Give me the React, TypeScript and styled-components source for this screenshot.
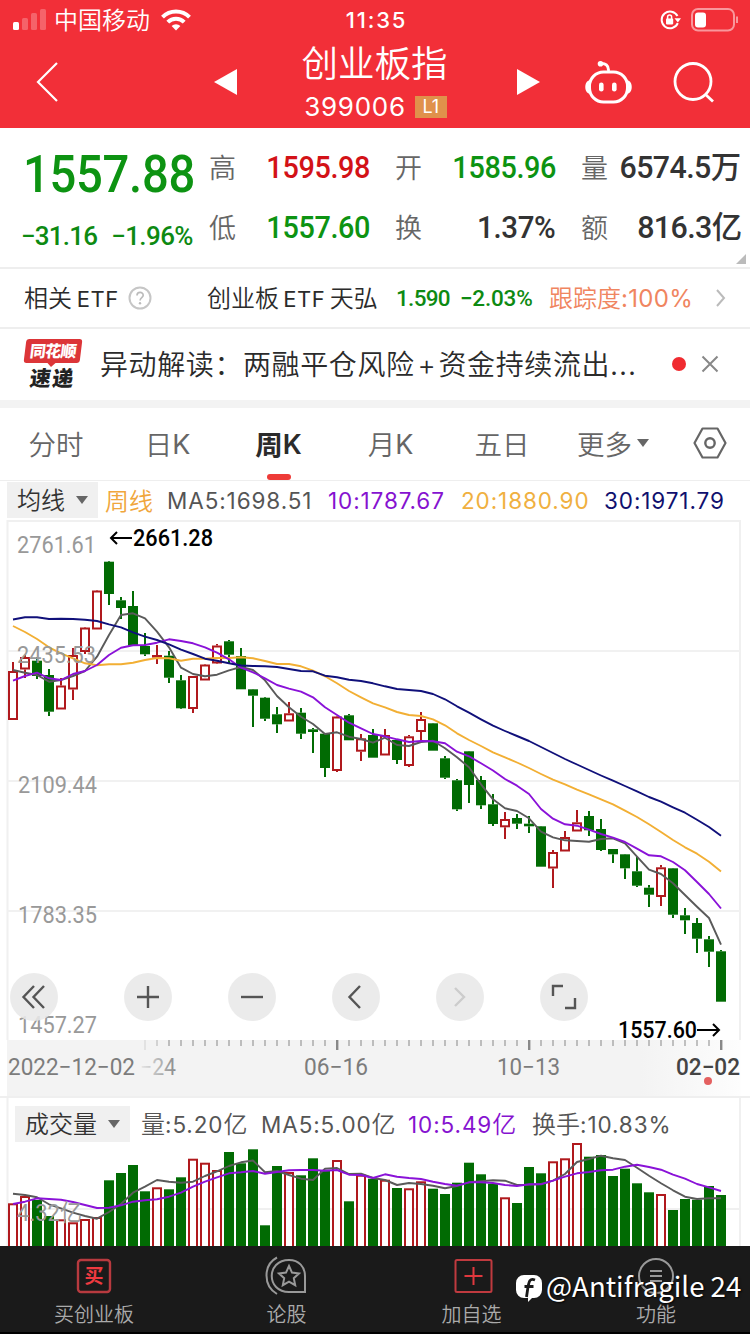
import React from 'react';
import styled, { createGlobalStyle } from 'styled-components';

const CJK = '"Noto Sans CJK SC", sans-serif';
const UI = `Inter, ${CJK}`;
const DIN = `Roboto, ${CJK}`;

const GlobalStyle = createGlobalStyle`
  * { box-sizing: border-box; }
  body {
    margin: 0;
    background: #fff;
    font-family: ${UI};
    font-weight: 350;
    font-optical-sizing: none;
    color: #2b2b2b;
  }
  svg { display: block; flex: none; overflow: visible; }
`;

const Screen = styled.div`
  position: relative;
  width: 750px;
  height: 1334px;
  overflow: hidden;
  display: flex;
  flex-direction: column;
  white-space: nowrap;
`;

/* ---------- shared text ---------- */

const Din = styled.span<{
  $size: number;
  $color?: string;
  $ls?: number;
  $weight?: number;
  $narrow?: number;
  $origin?: string;
}>`
  display: inline-block;
  font-family: ${DIN};
  font-size: ${(p) => p.$size}px;
  font-weight: ${(p) => p.$weight ?? 500};
  letter-spacing: ${(p) => p.$ls ?? 0}px;
  color: ${(p) => p.$color ?? '#333'};
  transform: scaleX(${(p) => p.$narrow ?? 1});
  transform-origin: ${(p) => p.$origin ?? 'left'} center;
`;

const Latin = styled.span<{ $size: number; $ls?: number }>`
  font-family: ${UI};
  font-size: ${(p) => p.$size}px;
  font-weight: 400;
  letter-spacing: ${(p) => p.$ls ?? 0}px;
`;

/* ---------- header ---------- */

const Header = styled.header`
  flex: none;
  height: 128px;
  background: #f22f38;
  color: #fff;
`;

const StatusBar = styled.div`
  display: grid;
  grid-template-columns: 1fr 70px 1fr;
  align-items: center;
  height: 40px;
  padding: 0 10px 0 13px;
`;

const StatusSide = styled.div<{ $end?: boolean }>`
  display: flex;
  align-items: center;
  gap: ${(p) => (p.$end ? 10 : 9)}px;
  justify-content: ${(p) => (p.$end ? 'flex-end' : 'flex-start')};
`;

const Carrier = styled.span`
  font-family: ${CJK};
  font-size: 24px;
  line-height: 38px;
  margin: -2px 2px 0 -1px;
`;

const Clock = styled.span`
  font-family: Inter;
  font-size: 22px;
  font-weight: 500;
  letter-spacing: 1.8px;
  text-align: center;
`;

const TitleBar = styled.div`
  display: grid;
  grid-template-columns: 214px 326px 210px;
  height: 88px;
  align-items: center;
`;

const TitleLeft = styled.div`
  display: flex;
  align-items: center;
  justify-content: space-between;
  padding: 0 0 4px 36px;
`;

const TitleRight = styled.div`
  display: flex;
  align-items: center;
  gap: 42px;
  padding: 0 0 4px 45px;
`;

const TitleMiddle = styled.div`
  display: flex;
  align-items: center;
  justify-content: space-between;
`;

const TitleText = styled.div`
  display: flex;
  flex-direction: column;
  align-items: center;
  margin: -5px 5px 0 0;
`;

const Title = styled.h1`
  margin: 0;
  font-family: ${CJK};
  font-size: 36.5px;
  font-weight: 350;
  line-height: 46px;
`;

const CodeLine = styled.div`
  display: flex;
  align-items: center;
  gap: 9px;
  height: 40px;
  font-size: 26px;
  font-weight: 400;
  letter-spacing: 0.7px;
  margin: 2px -2px -2px 0;
`;

const LevelTag = styled.span`
  width: 32px;
  height: 22px;
  background: #e0914b;
  font-size: 18px;
  line-height: 22px;
  text-align: center;
  letter-spacing: 0;
`;

/* ---------- quote ---------- */

const Quote = styled.section`
  position: relative;
  flex: none;
  height: 141px;
  display: flex;
  border-bottom: 2px solid #eee;
`;

const PriceColumn = styled.div`
  width: 209px;
  padding: 14px 0 0 21px;
`;

const Price = styled.div`
  height: 66px;
  line-height: 64px;
  padding-left: 2px;
`;

const Change = styled.div`
  display: flex;
  height: 56px;
  line-height: 56px;
  gap: 14px;
`;

const StatGrid = styled.div`
  display: grid;
  grid-template-columns: repeat(3, 160px);
  grid-template-rows: 60px 60px;
  column-gap: 26px;
  padding-top: 10px;
`;

const Stat = styled.div`
  display: flex;
  align-items: center;
  justify-content: space-between;
`;

const StatLabel = styled.span`
  font-family: ${CJK};
  font-size: 27px;
  line-height: 40px;
  margin-top: -2px;
  color: #666;
`;

const StatValue = styled(Din)`
  line-height: 40px;
`;

const Corner = styled.i`
  position: absolute;
  right: 4px;
  bottom: 3px;
  border-style: solid;
  border-width: 0 0 10px 10px;
  border-color: transparent transparent #bbb transparent;
`;

/* ---------- rows ---------- */

const EtfRow = styled.section`
  flex: none;
  display: flex;
  align-items: center;
  height: 60px;
  border-bottom: 2px solid #eee;
  padding: 0 24px;
  font-size: 24px;
  line-height: 58px;
`;

const EtfLabel = styled.div`
  width: 104px;
  word-spacing: -2px;
`;

const EtfName = styled.div`
  width: 190px;
  margin-left: 55px;
  word-spacing: -2.5px;
`;

const EtfNumbers = styled.div`
  width: 153px;
  display: flex;
  gap: 10px;
  line-height: 56px;
  margin-left: -1px;
`;

const Tracking = styled.div`
  width: 167px;
  color: #f08560;
  font-size: 24px;
  font-weight: 400;
  letter-spacing: 0.3px;
`;

const NewsRow = styled.section`
  flex: none;
  display: flex;
  align-items: center;
  height: 71px;
  padding-left: 24px;
`;

const Badge = styled.div`
  display: flex;
  flex-direction: column;
  width: 60px;
  height: 52px;
  margin-right: 16px;
`;

const BadgeTop = styled.div`
  position: relative;
  width: 56px;
  height: 24px;
  margin-left: 1px;
  background: #dc3538;
  border-radius: 3px;
  transform: skewX(-7deg);
  color: #fff;
  font-family: ${CJK};
  font-size: 16px;
  font-weight: 900;
  line-height: 23px;
  text-align: center;
  letter-spacing: -0.7px;
  &::after {
    content: '';
    position: absolute;
    left: 24px;
    top: 24px;
    border: solid transparent;
    border-width: 4px 4px 0;
    border-top-color: #dc3538;
  }
`;

const BadgeBottom = styled.div`
  transform: skewX(-7deg);
  padding-left: 6px;
  color: #222;
  font-family: ${CJK};
  font-size: 21px;
  font-weight: 900;
  line-height: 28px;
  letter-spacing: 1.5px;
`;

const NewsText = styled.div`
  width: 572px;
  font-family: ${CJK};
  font-size: 28px;
  letter-spacing: 0.6px;
  line-height: 60px;
  padding-bottom: 2px;
`;

const Plus = styled.span`
  font-family: Inter;
  margin: 0 2px 0 3px;
`;

const Dots = styled.span`
  letter-spacing: 1.5px;
`;

const RedDot = styled.i<{ $size: number }>`
  width: ${(p) => p.$size}px;
  height: ${(p) => p.$size}px;
  border-radius: 50%;
  background: #f02b30;
  margin: 0 15px 2px 0;
`;

const Divider = styled.div`
  flex: none;
  height: 8px;
  background: #f3f3f3;
`;

/* ---------- tabs ---------- */

const Tabs = styled.nav`
  flex: none;
  display: grid;
  grid-template-columns: 112px 111px 111px 113px 110px 113px 80px;
  height: 73px;
  border-bottom: 1px solid #eee;
`;

const Tab = styled.div<{ $active?: boolean }>`
  position: relative;
  display: flex;
  align-items: center;
  justify-content: center;
  gap: 4px;
  padding-bottom: 3px;
  font-size: 27.5px;
  font-family: ${CJK};
  font-weight: ${(p) => (p.$active ? 700 : 350)};
  color: ${(p) => (p.$active ? '#2b2b2b' : '#666')};
  &::after {
    content: '';
    display: ${(p) => (p.$active ? 'block' : 'none')};
    position: absolute;
    bottom: 0;
    width: 24px;
    height: 6px;
    border-radius: 3px;
    background: #ee3b38;
  }
`;

const TabK = styled.span<{ $bold?: boolean }>`
  font-family: Inter;
  font-size: 27px;
  font-weight: ${(p) => (p.$bold ? 600 : 400)};
  margin: 3px 0 0 -4px;
`;

const Legend = styled.div`
  flex: none;
  display: flex;
  align-items: center;
  height: 39px;
  padding-left: 7px;
  font-size: 22.5px;
`;

const Picker = styled.div<{ $w: number; $l: number }>`
  display: flex;
  align-items: center;
  justify-content: space-between;
  width: ${(p) => p.$w}px;
  height: 36px;
  margin-top: -1px;
  padding: 0 9px 0 ${(p) => p.$l}px;
  background: #f0f0f0;
  font-family: ${CJK};
  font-size: 24px;
  line-height: 32px;
  color: #333;
`;

const PickerText = styled.span`
  margin-top: -2px;
`;

const LegendItem = styled.span<{ $color: string; $w: number; $pad?: number }>`
  width: ${(p) => p.$w}px;
  padding-left: ${(p) => p.$pad ?? 0}px;
  color: ${(p) => p.$color};
  font-weight: 400;
  letter-spacing: 0.9px;
  line-height: 38px;
`;

const Cjk = styled.span<{ $size: number }>`
  font-family: ${CJK};
  font-size: ${(p) => p.$size}px;
  font-weight: 350;
  letter-spacing: 0;
`;

/* ---------- charts ---------- */

const ChartArea = styled.section`
  position: relative;
  flex: none;
  height: 520px;
`;

const Controls = styled.div`
  position: absolute;
  left: 10px;
  top: 453px;
  display: flex;
  gap: 56px;
`;

const RoundButton = styled.button<{ $first?: boolean }>`
  display: flex;
  align-items: center;
  justify-content: center;
  width: 48px;
  height: 48px;
  padding: 0;
  margin-right: ${(p) => (p.$first ? 10 : 0)}px;
  border: 0;
  border-radius: 50%;
  background: rgba(232, 232, 232, 0.88);
`;

const Axis = styled.div`
  flex: none;
  height: 56px;
  background: linear-gradient(90deg, #fff 7px, #f3f3f3 7px, #f3f3f3 640px, #fdfdfd 740px, #fff 741px);
`;

const Volume = styled.section`
  position: relative;
  flex: none;
  height: 150px;
  border-top: 2px solid #efefef;
`;

const VolumeLegend = styled(Legend)`
  position: absolute;
  top: 7px;
  left: 8px;
  height: 38px;
`;

/* ---------- bottom nav ---------- */

const BottomNav = styled.nav`
  flex: none;
  display: grid;
  grid-template-columns: 188px 197px 173px 196px;
  height: 88px;
  background: #1a1a1a;
  border-bottom: 2px solid #000;
`;

const NavItem = styled.div`
  display: flex;
  flex-direction: column;
  align-items: center;
  padding-top: 10px;
  font-family: ${CJK};
  font-size: 20px;
  line-height: 30px;
  color: #aaa;
`;

const NavIcon = styled.div`
  height: 43px;
`;

const Watermark = styled.div`
  position: absolute;
  left: 516px;
  top: 1269px;
  display: flex;
  align-items: center;
  gap: 4px;
  height: 38px;
  color: #fff;
  font-family: ${CJK};
  font-size: 27.6px;
  font-weight: 400;
  text-shadow: 1px 1px 2px #000;
`;

const Handle = styled.span`
  line-height: 32px;
  margin-top: -7px;
`;

/* ---------- data ---------- */

type Candle = [0 | 1, number, number, number, number];
// [rising, body top, body bottom, high, low]
const candles: Candle[] = [
  [1, 671, 720, 662, 720], [1, 657, 669.5, 655, 678], [0, 660.7, 676, 657, 679], [0, 675, 711.7, 669, 716],
  [1, 685.5, 709.5, 678, 709], [1, 655, 689.5, 648, 700], [1, 627.5, 652, 627, 654], [1, 590.5, 629.5, 590, 629],
  [0, 561.7, 594, 561, 605], [0, 600.3, 608, 597, 619], [0, 606, 645.7, 591, 645], [0, 646, 654.3, 633, 656],
  [1, 655, 657.5, 645, 664], [0, 655.7, 677.7, 651, 683], [0, 680.3, 708.3, 675, 709], [1, 676, 709, 676, 713],
  [1, 664.5, 680.5, 664, 680], [1, 645.5, 663.5, 644, 664], [0, 641.3, 654.7, 640, 664], [0, 656, 689.3, 648, 689],
  [0, 689.3, 695.7, 689, 727], [0, 697.7, 718.7, 697, 721], [0, 714.3, 724.3, 707, 733], [1, 713.3, 721.5, 702, 721],
  [0, 712.7, 733.7, 708, 739], [0, 729.3, 732, 728, 753], [0, 733.7, 768, 733, 777], [1, 716.5, 771, 716, 772],
  [0, 715.3, 740.3, 714, 740], [1, 738.3, 751.7, 734, 761], [0, 735, 757.7, 729, 757], [1, 735, 755.5, 729, 755],
  [0, 740, 760, 739, 764], [1, 736.3, 766, 735, 767], [1, 719, 732, 712, 740], [0, 723.3, 750.7, 723, 750],
  [0, 758.3, 777.7, 756, 779], [0, 780.3, 809.3, 779, 811], [0, 751.3, 785, 751, 803], [0, 780, 805.3, 776, 809],
  [0, 804.3, 824, 794, 826], [1, 819, 827.3, 812, 839], [0, 818, 823.7, 814, 829], [0, 823.7, 826.3, 816, 833],
  [0, 826.3, 866.7, 826, 866], [1, 852, 868.5, 850, 888], [1, 837, 851.5, 831, 851], [1, 822.3, 831.5, 810, 831],
  [0, 816, 830.3, 811, 836], [0, 829, 850, 819, 851], [0, 849, 854.3, 849, 863], [0, 854.3, 868.3, 854, 879],
  [0, 871.3, 885.7, 857, 887], [0, 887.7, 894.7, 885, 907], [1, 867.3, 897, 865, 906], [0, 868.3, 914.7, 868, 918],
  [0, 915.3, 920.3, 908, 934], [0, 923, 938.7, 918, 953], [0, 939.3, 951.7, 936, 967], [0, 951.3, 1001.7, 950, 1001],
];

const ma5 = [
  670, 672.7, 675, 681.7, 680, 676, 671, 656.7, 635, 615, 613.3, 618.3, 631.7, 647.3, 667.7, 674, 676.3, 674.7, 670.3, 667,
  670, 680.3, 696, 707.3, 716.7, 724, 734, 732.3, 736.7, 739, 742.7, 737.7, 745, 746, 742, 740.7, 748.3, 757.3, 767.3, 784.3,
  799.3, 808.3, 811, 818.3, 831.7, 837.3, 840.3, 841, 841.7, 839, 838.3, 843.3, 856.7, 869.7, 874, 883.3, 895, 906.7, 918, 944.7,
];
const ma10 = [
  680.7, 676, 672.7, 678.3, 680, 674, 671, 665, 655, 647.7, 645.3, 645, 642.7, 639.3, 641, 643.3, 647.3, 652.7, 659.3, 667.7,
  672.3, 678.3, 685, 688.7, 691.7, 697.3, 707.3, 715, 722.7, 728.3, 734, 736.3, 739.3, 742, 741, 741.3, 743.3, 751.7, 756.3, 763.3,
  770.5, 779, 785.7, 794, 809, 818.7, 824.3, 825.7, 829.7, 834, 837.7, 842, 848.7, 855.3, 856.3, 862, 870.3, 882, 894, 908.5,
];
const ma20 = [
  626, 632, 639, 647.3, 653.3, 658.3, 663.3, 665.3, 664.3, 664.3, 662.7, 660, 658, 658.3, 660.7, 658.7, 658.7, 658, 658, 657.3,
  658.3, 661, 664, 664, 666.3, 670.7, 676.3, 683.3, 691, 697.3, 703.3, 707.3, 712, 715, 716, 719.3, 725.3, 733.3, 740, 746,
  752.3, 757.3, 762.5, 768, 774, 779.7, 784.3, 789.7, 794.3, 799.3, 804.3, 810.7, 817, 824.3, 832, 840, 847.3, 853.7, 861.7, 871.5,
];
const ma30 = [
  619.5, 617.3, 617.3, 619, 618.7, 619, 619.7, 621, 624.3, 627.3, 632.3, 636.7, 640, 644.3, 649.7, 654, 658.7, 660.7, 663.3, 665.5,
  666, 666.3, 667, 669, 671, 671.3, 675.7, 677.3, 679.7, 681, 683.3, 686.3, 689, 690, 691, 694, 699.3, 706.3, 712.7, 719.3,
  725.7, 731, 736, 741, 747, 753, 759, 764.5, 770, 775.5, 780.7, 786, 791.3, 797, 801.7, 807.3, 812.7, 819.7, 827, 835.7,
];

const volTops = [
  1203.3, 1196, 1200, 1216, 1219.3, 1222.3, 1219, 1217, 1180.3, 1173, 1165, 1191.3, 1187.3, 1189.3, 1177.3, 1158.7, 1162.7, 1170, 1152, 1163.3,
  1149.3, 1225.3, 1166, 1172, 1175.3, 1158.3, 1170, 1160, 1201.3, 1174.7, 1178.7, 1179.7, 1188, 1188.3, 1181.3, 1188.7, 1194, 1182.7, 1162.7, 1174.3,
  1183.7, 1197.3, 1203, 1167, 1173.3, 1161.3, 1158.3, 1143, 1156.7, 1155, 1176, 1168.7, 1183.3, 1192.3, 1194, 1210, 1199, 1199.7, 1186, 1195,
];
const volMa5 = [
  1193.7, 1195, 1197.3, 1204.3, 1208.3, 1212.7, 1216, 1218.7, 1212, 1204, 1192.7, 1186.7, 1180, 1181.7, 1182.7, 1181.7, 1176, 1171.3, 1166, 1162.3,
  1160.5, 1172.3, 1171, 1175, 1178.7, 1180, 1168.7, 1168, 1174, 1173.7, 1178, 1180, 1185, 1183, 1184, 1185.7, 1188.3, 1186, 1182.3, 1181.3,
  1180.3, 1180.7, 1185, 1184.7, 1184, 1180.7, 1174, 1162, 1159, 1155.7, 1158.3, 1160, 1167.7, 1175.7, 1183.3, 1190.3, 1196.7, 1199, 1198.3, 1198.3,
];
const volMa10 = [
  1204, 1201.7, 1198.3, 1199, 1199.7, 1202, 1205, 1208, 1207.7, 1205.3, 1201.7, 1200.3, 1199.3, 1196.7, 1192.7, 1186.7, 1181.7, 1177.3, 1173.3, 1172.3,
  1171, 1173.7, 1172, 1170.3, 1170, 1170, 1170.7, 1170, 1174.7, 1175, 1178, 1174.3, 1176.7, 1178, 1179, 1181.7, 1184, 1185.7, 1182.3, 1182.3,
  1183, 1185, 1186, 1184.3, 1184.3, 1180.7, 1176.7, 1173.3, 1172, 1170.3, 1169.7, 1166.7, 1164.7, 1167, 1169.7, 1174.7, 1178.7, 1184, 1187.3, 1191,
];

const xAt = (i: number) => 13 + 12 * i;
const GREEN = '#016b03';
const RED = '#b0191d';

const Line = ({ data, color }: { data: number[]; color: string }) => (
  <polyline
    points={data.map((y, i) => `${xAt(i)},${y}`).join(' ')}
    fill="none"
    stroke={color}
    strokeWidth="1.9"
    strokeLinejoin="round"
  />
);

const Caret = () => (
  <svg width="14" height="10" viewBox="0 0 14 10">
    <path d="M1 1h12L7 9z" fill="#666" />
  </svg>
);

const gridText = {
  fontFamily: 'Roboto, "Noto Sans CJK SC", sans-serif',
  fontSize: 23.5,
  fontWeight: 400,
  lengthAdjust: 'spacingAndGlyphs',
};

const KChart = () => (
  <svg width="750" height="520" viewBox="0 520 750 520">
    <path d="M7.5 1040V521H740V1040" fill="none" stroke="#f0f0f0" strokeWidth="2" />
    {[651, 781, 911].map((y) => (
      <path key={y} d={`M7 ${y}H740`} stroke="#f1f1f1" strokeWidth="2" />
    ))}
    {candles.map(([up, top, bottom, high, low], i) => {
      const x = xAt(i);
      const c = up ? RED : GREEN;
      return (
        <g key={i} fill={c}>
          {high < top && <rect x={x - 1} y={high} width="2" height={top - high} />}
          {low > bottom && <rect x={x - 1} y={bottom} width="2" height={low - bottom} />}
          {up ? (
            <rect x={x - 4} y={top + 1} width="8" height={Math.max(bottom - top - 2, 0.6)} fill="#fff" stroke={c} strokeWidth="2" />
          ) : (
            <rect x={x - 5} y={top} width="10" height={bottom - top} />
          )}
        </g>
      );
    })}
    <Line data={ma5} color="#5a5a5a" />
    <Line data={ma20} color="#f2af34" />
    <Line data={ma10} color="#8a12d8" />
    <Line data={ma30} color="#10107a" />
    <g fill="#999">
      <text {...gridText} x="17" y="553" textLength="79">2761.61</text>
      <text {...gridText} x="17" y="663" textLength="79">2435.53</text>
      <text {...gridText} x="18" y="793" textLength="79">2109.44</text>
      <text {...gridText} x="18" y="923" textLength="79">1783.35</text>
      <text {...gridText} x="18" y="1033" textLength="79">1457.27</text>
    </g>
    <g fill="#000">
      <text {...gridText} fontWeight={500} x="133" y="546" textLength="80">2661.28</text>
      <text {...gridText} fontWeight={500} x="618" y="1038" textLength="79">1557.60</text>
    </g>
    <g fill="none" stroke="#000" strokeWidth="2">
      <path d="M132 538H111M117 532l-6 6 6 6" />
      <path d="M697 1030h22M713 1024l6 6-6 6" />
    </g>
  </svg>
);

const AxisDrawing = () => (
  <svg width="750" height="56" viewBox="0 1040 750 56">
    <defs>
      <linearGradient id="fade" x1="140" x2="180" gradientUnits="userSpaceOnUse">
        <stop offset="0" stopColor="#808080" stopOpacity="0.1" />
        <stop offset="1" stopColor="#808080" />
      </linearGradient>
    </defs>
    {Array.from({ length: 49 }, (_, k) => {
      const x = 145 + 12 * k;
      const major = x === 337 || x === 529 || x === 721;
      return (
        <rect
          key={k}
          x={x - (major ? 1 : 0.5)}
          y="1040"
          width={major ? 2.4 : 1}
          height={k === 0 || major ? 10 : 6}
          fill="#888"
          opacity={k === 0 ? 0.3 : k === 1 ? 0.6 : 1}
        />
      );
    })}
    <g fill="#7c7c7c">
      <text {...gridText} x="8" y="1075" textLength="127">2022−12−02</text>
      <text {...gridText} x="140" y="1075" textLength="36" fill="url(#fade)">−24</text>
      <text {...gridText} x="304" y="1075" textLength="64">06−16</text>
      <text {...gridText} x="497" y="1075" textLength="63">10−13</text>
      <text {...gridText} x="676" y="1075" textLength="64" fill="#444" fontWeight={500}>02−02</text>
    </g>
    <circle cx="708" cy="1081" r="4" fill="#e46060" />
  </svg>
);

const VolumeChart = () => (
  <svg width="750" height="148" viewBox="0 1098 750 148" style={{ overflow: 'hidden' }}>
    <path d="M7.5 1098V1246M740 1098V1246M7 1209H740" fill="none" stroke="#f0f0f0" strokeWidth="2" />
    {volTops.map((top, i) => {
      const x = xAt(i);
      return candles[i][0] ? (
        <rect key={i} x={x - 4} y={top + 1} width="8" height={1260 - top} fill="#fff" stroke={RED} strokeWidth="2" />
      ) : (
        <rect key={i} x={x - 5} y={top} width="10" height={1246 - top} fill={GREEN} />
      );
    })}
    <Line data={volMa5} color="#5a5a5a" />
    <Line data={volMa10} color="#8a12d8" />
    <text {...gridText} x="17" y="1221" fill="#999" textLength="65">4.32亿</text>
  </svg>
);

const iconStroke = { fill: 'none', stroke: '#555', strokeWidth: 2.4 };

const App = () => (
  <>
    <GlobalStyle />
    <Screen>
      <Header>
        <StatusBar>
          <StatusSide>
            <svg width="33" height="22" viewBox="0 0 33 22">
              <rect x="0" y="13" width="6" height="8" rx="1.5" fill="#fff" />
              <rect x="9" y="9" width="6" height="12" rx="1.5" fill="#fff" opacity=".25" />
              <rect x="18" y="4" width="6" height="17" rx="1.5" fill="#fff" opacity=".25" />
              <rect x="27" y="0" width="6" height="21" rx="1.5" fill="#fff" opacity=".25" />
            </svg>
            <Carrier>中国移动</Carrier>
            <svg width="30" height="22" viewBox="0 0 30 22">
              <g fill="none" stroke="#fff" strokeWidth="4">
                <path d="M1.5 8.2a19 19 0 0 1 27 0" />
                <path d="M6.8 13.2a11.6 11.6 0 0 1 16.4 0" />
              </g>
              <path d="M10.6 17a6.2 6.2 0 0 1 8.8 0L15 21.5z" fill="#fff" />
            </svg>
          </StatusSide>
          <Clock>11:35</Clock>
          <StatusSide $end>
            <svg width="21" height="20" viewBox="0 0 21 20">
              <path d="M17.5 6A8.4 8.4 0 1 0 17.8 13.2" fill="none" stroke="#fff" strokeWidth="2" />
              <path d="M14.5 8.2h6.5L17.8 12.5z" fill="#fff" />
              <rect x="6" y="8.6" width="7.2" height="5.8" rx=".8" fill="#fff" />
              <path d="M7.6 9V7a2 2 0 0 1 4 0v2" fill="none" stroke="#fff" strokeWidth="1.5" />
            </svg>
            <svg width="49" height="24" viewBox="0 0 49 24">
              <rect x="1" y="1" width="42" height="21.5" rx="6" fill="none" stroke="#fff" strokeWidth="2" opacity=".5" />
              <rect x="4" y="4.5" width="11" height="15" rx="3" fill="#fff" />
              <path d="M46 8.5v6.5" stroke="#fff" strokeWidth="2" opacity=".5" />
            </svg>
          </StatusSide>
        </StatusBar>
        <TitleBar>
          <TitleLeft>
            <svg width="22" height="40" viewBox="0 0 22 40">
              <path d="M21 1L2 20l19 19" fill="none" stroke="#fff" strokeWidth="2.2" />
            </svg>
          </TitleLeft>
          <TitleMiddle>
            <svg width="24" height="26" viewBox="0 0 24 26" transform="translate(0,-2)">
              <path d="M0 13L23 0v26z" fill="#fff" />
            </svg>
            <TitleText>
              <Title>创业板指</Title>
              <CodeLine>
                399006<LevelTag>L1</LevelTag>
              </CodeLine>
            </TitleText>
            <svg width="24" height="26" viewBox="0 0 24 26" transform="translate(0,-2)">
              <path d="M24 13L1 0v26z" fill="#fff" />
            </svg>
          </TitleMiddle>
          <TitleRight>
            <svg width="47" height="44" viewBox="0 0 47 44">
              <g fill="none" stroke="#fff" strokeWidth="3" strokeLinecap="round">
                <path d="M15.5 3.5c5-.5 8 2 8 6.500" />
                <rect x="4.500" y="12" width="38" height="30" rx="14" />
                <path d="M4 22c-3 2-3 8 0 10M43 22c3 2 3 8 0 10" />
              </g>
              <circle cx="15.500" cy="3.700" r="2.800" fill="#fff" />
              <rect x="14" y="22.500" width="4.600" height="9" rx="2.300" fill="#fff" />
              <rect x="27" y="22.500" width="4.600" height="9" rx="2.300" fill="#fff" />
            </svg>
            <svg width="40" height="40" viewBox="0 0 40 40">
              <circle cx="19" cy="19.500" r="18" fill="none" stroke="#fff" strokeWidth="2.800" />
              <path d="M31 32l8 7.500" stroke="#fff" strokeWidth="2.800" />
            </svg>
          </TitleRight>
        </TitleBar>
      </Header>

      <Quote>
        <PriceColumn>
          <Price>
            <Din $size={52.5} $ls={-0.3} $narrow={0.898} $color="#0d9312">1557.88</Din>
          </Price>
          <Change>
            <Din $size={26} $ls={-0.8} $color="#0d8a12">−31.16</Din>
            <Din $size={26} $ls={-0.6} $color="#0d8a12">−1.96%</Din>
          </Change>
        </PriceColumn>
        <StatGrid>
          <Stat>
            <StatLabel>高</StatLabel>
            <StatValue $size={31} $ls={-0.4} $narrow={0.93} $origin="120%" $color="#d31217">1595.98</StatValue>
          </Stat>
          <Stat>
            <StatLabel>开</StatLabel>
            <StatValue $size={31} $ls={-0.4} $narrow={0.93} $origin="120%" $color="#0d9312">1585.96</StatValue>
          </Stat>
          <Stat>
            <StatLabel>量</StatLabel>
            <StatValue $size={31} $ls={-0.6} $narrow={0.98} $origin="right">6574.5万</StatValue>
          </Stat>
          <Stat>
            <StatLabel>低</StatLabel>
            <StatValue $size={31} $ls={-0.4} $narrow={0.93} $origin="120%" $color="#0d9312">1557.60</StatValue>
          </Stat>
          <Stat>
            <StatLabel>换</StatLabel>
            <StatValue $size={31} $ls={-0.4} $narrow={0.95} $origin="right">1.37%</StatValue>
          </Stat>
          <Stat>
            <StatLabel>额</StatLabel>
            <StatValue $size={31} $ls={-0.6} $narrow={0.98} $origin="right">816.3亿</StatValue>
          </Stat>
        </StatGrid>
        <Corner />
      </Quote>

      <EtfRow>
        <EtfLabel>
          <Cjk $size={24}>相关</Cjk> <Latin $size={22} $ls={0.5}>ETF</Latin>
        </EtfLabel>
        <svg width="24" height="24" viewBox="0 0 24 24">
          <circle cx="12" cy="12" r="10.500" fill="none" stroke="#c6c6c6" strokeWidth="2" />
          <path d="M9 9.500c0-4 6.200-4 6.200-.3 0 2.600-3.100 2.300-3.100 5.300" fill="none" stroke="#bbb" strokeWidth="1.700" />
          <circle cx="12" cy="17.300" r="1.200" fill="#bbb" />
        </svg>
        <EtfName>
          <Cjk $size={24}>创业板</Cjk> <Latin $size={22} $ls={0.6}>ETF</Latin> <Cjk $size={24}>天弘</Cjk>
        </EtfName>
        <EtfNumbers>
          <Din $size={22.5} $ls={-0.7} $color="#0d8a12">1.590</Din>
          <Din $size={22.5} $ls={-0.2} $color="#0d8a12">−2.03%</Din>
        </EtfNumbers>
        <Tracking>
          <Cjk $size={24}>跟踪度</Cjk>:100%
        </Tracking>
        <svg width="10" height="18" viewBox="0 0 10 18">
          <path d="M1 1l7 8-7 8" fill="none" stroke="#bbb" strokeWidth="2" />
        </svg>
      </EtfRow>

      <NewsRow>
        <Badge>
          <BadgeTop>同花顺</BadgeTop>
          <BadgeBottom>速递</BadgeBottom>
        </Badge>
        <NewsText>
          异动解读：两融平仓风险<Plus>+</Plus>资金持续流出<Dots>...</Dots>
        </NewsText>
        <RedDot $size={14} />
        <svg width="18" height="20" viewBox="0 0 18 20">
          <path d="M1.500 1.500l15 15M16.500 1.500l-15 15" stroke="#888" strokeWidth="2" />
        </svg>
      </NewsRow>

      <Divider />

      <Tabs>
        <Tab>分时</Tab>
        <Tab>日<TabK>K</TabK></Tab>
        <Tab $active>周<TabK $bold>K</TabK></Tab>
        <Tab>月<TabK>K</TabK></Tab>
        <Tab>五日</Tab>
        <Tab>更多<Caret /></Tab>
        <Tab>
          <svg width="34" height="32" viewBox="0 0 34 32">
            <path d="M9.500 1.500h15L32.500 16l-8 14.500h-15L1.500 16z" fill="none" stroke="#666" strokeWidth="2.200" strokeLinejoin="round" />
            <circle cx="17" cy="16" r="4.700" fill="none" stroke="#666" strokeWidth="2.400" />
          </svg>
        </Tab>
      </Tabs>

      <Legend>
        <Picker $w={91} $l={10}>
          <PickerText>均线</PickerText>
          <Caret />
        </Picker>
        <LegendItem $color="#f0a63c" $w={69} $pad={7}>
          <Cjk $size={24}>周线</Cjk>
        </LegendItem>
        <LegendItem $color="#555" $w={161}>MA5:1698.51</LegendItem>
        <LegendItem $color="#8612d0" $w={133}>10:1787.67</LegendItem>
        <LegendItem $color="#f0b040" $w={143}>20:1880.90</LegendItem>
        <LegendItem $color="#10106e" $w={130}>30:1971.79</LegendItem>
      </Legend>

      <ChartArea>
        <KChart />
        <Controls>
          <RoundButton $first>
            <svg width="24" height="24" viewBox="0 0 24 24" {...iconStroke}><path d="M12 1L1.500 12 12 23M22 1L11.500 12 22 23" /></svg>
          </RoundButton>
          <RoundButton>
            <svg width="22" height="22" viewBox="0 0 22 22" {...iconStroke}><path d="M11 0v22M0 11h22" /></svg>
          </RoundButton>
          <RoundButton>
            <svg width="22" height="22" viewBox="0 0 22 22" {...iconStroke}><path d="M0 11h22" /></svg>
          </RoundButton>
          <RoundButton>
            <svg width="16" height="24" viewBox="0 0 16 24" {...iconStroke}><path d="M12 1L1.500 12 12 23" /></svg>
          </RoundButton>
          <RoundButton>
            <svg width="12" height="20" viewBox="0 0 12 20" {...iconStroke} stroke="#ccc"><path d="M1 1l9 9-9 9" /></svg>
          </RoundButton>
          <RoundButton>
            <svg width="26" height="26" viewBox="0 0 26 26" {...iconStroke}><path d="M2 12V2h10M24 14v10H14" /></svg>
          </RoundButton>
        </Controls>
      </ChartArea>

      <Axis>
        <AxisDrawing />
      </Axis>

      <Volume>
        <VolumeChart />
        <VolumeLegend>
          <Picker $w={115} $l={10}>
            <PickerText>成交量</PickerText>
            <Caret />
          </Picker>
          <LegendItem $color="#555" $w={131} $pad={11}>
            <Cjk $size={24}>量</Cjk>:5.20<Cjk $size={24}>亿</Cjk>
          </LegendItem>
          <LegendItem $color="#555" $w={147}>MA5:5.00<Cjk $size={24}>亿</Cjk></LegendItem>
          <LegendItem $color="#8612d0" $w={124}>10:5.49<Cjk $size={24}>亿</Cjk></LegendItem>
          <LegendItem $color="#555" $w={140}><Cjk $size={24}>换手</Cjk>:10.83%</LegendItem>
        </VolumeLegend>
      </Volume>

      <BottomNav>
        <NavItem>
          <NavIcon>
            <svg width="36" height="38" viewBox="0 0 36 38">
              <rect x="2" y="4" width="32" height="32" rx="3" fill="none" stroke="#b83a3f" strokeWidth="2.400" />
              <text x="18" y="27" textAnchor="middle" fontSize="19" fontWeight="700" fill="#ee3a40" fontFamily='"Noto Sans CJK SC", sans-serif'>买</text>
            </svg>
          </NavIcon>
          买创业板
        </NavItem>
        <NavItem>
          <NavIcon>
            <svg width="44" height="40" viewBox="0 0 44 40" fill="none" stroke="#999" strokeWidth="2">
              <path d="M12 1.500C-2 9-2 30 12 38" />
              <path d="M40 36H24C1 36 1 4 24 4c10 0 16 7 16 16z" />
              <path d="M24 10l3 6.600 7 .8-5.200 4.800 1.400 7-6.200-3.500-6.200 3.500 1.400-7-5.200-4.800 7-.8z" />
            </svg>
          </NavIcon>
          论股
        </NavItem>
        <NavItem>
          <NavIcon>
            <svg width="38" height="38" viewBox="0 0 38 38" fill="none">
              <rect x="2.500" y="4" width="36" height="32" rx="1.500" stroke="#c03a3f" strokeWidth="2" />
              <path d="M20.500 11v18M11.500 20h18" stroke="#e0383e" strokeWidth="2" />
            </svg>
          </NavIcon>
          加自选
        </NavItem>
        <NavItem>
          <NavIcon>
            <svg width="38" height="40" viewBox="0 0 38 40" fill="none" stroke="#999" strokeWidth="2">
              <circle cx="19" cy="20" r="17" />
              <path d="M13 15h12M13 20h12M13 25h12" />
            </svg>
          </NavIcon>
          功能
        </NavItem>
      </BottomNav>

      <Watermark>
        <svg width="26" height="30" viewBox="0 0 26 30">
          <path d="M8 2h10a8 8 0 0 1 8 8v7a8 8 0 0 1-8 8h-2l-4 4v-4H8a8 8 0 0 1-8-8v-7a8 8 0 0 1 8-8z" fill="#fff" />
          <path d="M19 7c-5-2-6 1-7 7l-1.500 10M8.500 13.500h9" fill="none" stroke="#1a1a1a" strokeWidth="2.800" />
        </svg>
        <Handle>@Antifragile 24</Handle>
      </Watermark>
    </Screen>
  </>
);

export default App;
